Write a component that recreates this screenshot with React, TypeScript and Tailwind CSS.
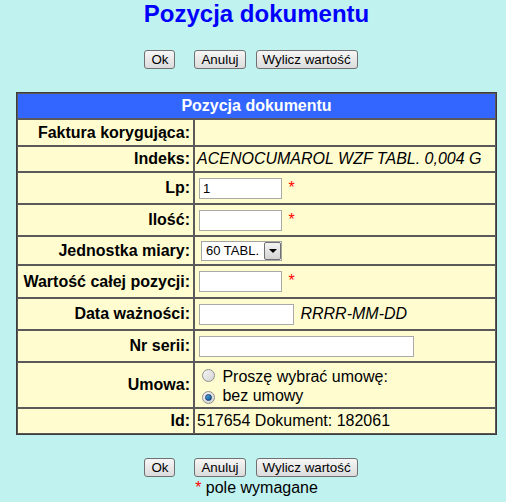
import React from "react";

const font = "font-['Liberation_Sans',Arial,sans-serif]";

const Button: React.FC<{ label: string; className?: string }> = ({ label, className }) => (
    <button
        className={`h-[19px] px-[6px] text-[13.33px] leading-[15px] text-black border border-[#707070] rounded-[3px] bg-gradient-to-b from-[#f6f6f6] to-[#dcdcdc] ${className ?? ""}`}
    >
        {label}
    </button>
);

const Star: React.FC = () => <span className="text-[#ff0000] text-[16px]"> *</span>;

const TextInput: React.FC<{ w: string; value?: string }> = ({ w, value }) => (
    <span
        className={`inline-block align-baseline m-[2px] h-[21px] ${w} border border-[#a9a9a9] bg-white px-[3px] text-[13px] leading-[19px] text-black`}
    >
        {value ?? "\u00a0"}
    </span>
);

const Radio: React.FC<{ checked?: boolean }> = ({ checked }) => (
    <span className="inline-flex items-center justify-center w-[13px] h-[13px] ml-[5px] mr-[3px] mt-[3px] rounded-full border border-[#8e8f8f] bg-gradient-to-br from-[#f4f4f4] to-[#d5d5d5] align-baseline">
        {checked && (
            <span className="w-[7px] h-[7px] rounded-full bg-gradient-to-br from-[#4fb0e8] to-[#0c4f8f] border border-[#1d3c6e]" />
        )}
    </span>
);

const rows: { label: string; content: React.ReactNode; h: string }[] = [
    { label: "Faktura korygująca:", content: null, h: "h-[27px]" },
    {
        label: "Indeks:",
        content: <i>ACENOCUMAROL WZF TABL. 0,004 G</i>,
        h: "h-[26px]",
    },
    {
        label: "Lp:",
        content: (
            <>
                <TextInput w="w-[83px]" value="1" />
                <Star />
            </>
        ),
        h: "h-[32px]",
    },
    {
        label: "Ilość:",
        content: (
            <>
                <TextInput w="w-[83px]" />
                <Star />
            </>
        ),
        h: "h-[32px]",
    },
    {
        label: "Jednostka miary:",
        content: (
            <span className="inline-flex align-middle ml-[4px] mt-[1px] h-[20px] w-[81px] border border-[#a5a5a5] bg-white">
                <span className="flex-1 pl-[4px] text-[13px] leading-[18px] text-black">60 TABL.</span>
                <span className="w-[17px] h-[18px] border border-[#707070] rounded-[2px] bg-gradient-to-b from-[#f4f4f4] to-[#d4d4d4] flex items-center justify-center">
                    <span className="w-0 h-0 border-l-[4px] border-r-[4px] border-t-[4px] border-l-transparent border-r-transparent border-t-black" />
                </span>
            </span>
        ),
        h: "h-[29px]",
    },
    {
        label: "Wartość całej pozycji:",
        content: (
            <>
                <TextInput w="w-[83px]" />
                <Star />
            </>
        ),
        h: "h-[33px]",
    },
    {
        label: "Data ważności:",
        content: (
            <>
                <TextInput w="w-[95px]" /> <i>RRRR-MM-DD</i>
            </>
        ),
        h: "h-[32px]",
    },
    {
        label: "Nr serii:",
        content: <TextInput w="w-[215px]" />,
        h: "h-[32px]",
    },
    {
        label: "Umowa:",
        content: (
            <div className="leading-[19px]">
                <div>
                    <Radio /> Proszę wybrać umowę:
                </div>
                <div>
                    <Radio checked /> bez umowy
                </div>
            </div>
        ),
        h: "h-[46px]",
    },
    {
        label: "Id:",
        content: <>517654 Dokument: 182061</>,
        h: "h-[26px]",
    },
];

const App: React.FC = () => {
    return (
        <div className={`min-h-[502px] w-[506px] bg-[#c0f2f0] ${font} text-black`}>
            <div className="ml-[16px] w-[481px] flex flex-col">
                {/* tytuł */}
                <h1 className="text-center text-[24px] leading-[28px] font-bold text-[#0000ff]">
                    Pozycja dokumentu
                </h1>

                {/* przyciski górne */}
                <div className="mt-[22px] flex justify-center pr-[11px]">
                    <Button label="Ok" className="mr-[19px]" />
                    <Button label="Anuluj" className="mr-[10px]" />
                    <Button label="Wylicz wartość" />
                </div>

                {/* tabela */}
                <table className="mt-[23px] w-[481px] border-separate border-spacing-0 border border-[#3c3c3c] text-[16px] leading-[18px]">
                    <tbody>
                        <tr>
                            <td
                                colSpan={2}
                                className="h-[26px] bg-[#3366ff] border border-[#5a5a5a] text-center text-white font-bold p-0"
                            >
                                Pozycja dokumentu
                            </td>
                        </tr>
                        {rows.map((r) => (
                            <tr key={r.label}>
                                <td
                                    className={`${r.h} w-[177px] bg-[#fffdd0] border border-[#5a5a5a] text-right font-bold pr-[3px] pl-[2px] py-0 whitespace-nowrap`}
                                >
                                    {r.label}
                                </td>
                                <td
                                    className={`${r.h} bg-[#fffdd0] border border-[#5a5a5a] px-[2px] py-0 whitespace-nowrap`}
                                >
                                    {r.content}
                                </td>
                            </tr>
                        ))}
                    </tbody>
                </table>

                {/* przyciski dolne */}
                <div className="mt-[23px] flex justify-center pr-[11px]">
                    <Button label="Ok" className="mr-[19px]" />
                    <Button label="Anuluj" className="mr-[10px]" />
                    <Button label="Wylicz wartość" />
                </div>
                <div className="mt-[2px] text-center text-[16px] leading-[18px]">
                    <span className="text-[#ff0000]">*</span> pole wymagane
                </div>
            </div>
        </div>
    );
};

export default App;
